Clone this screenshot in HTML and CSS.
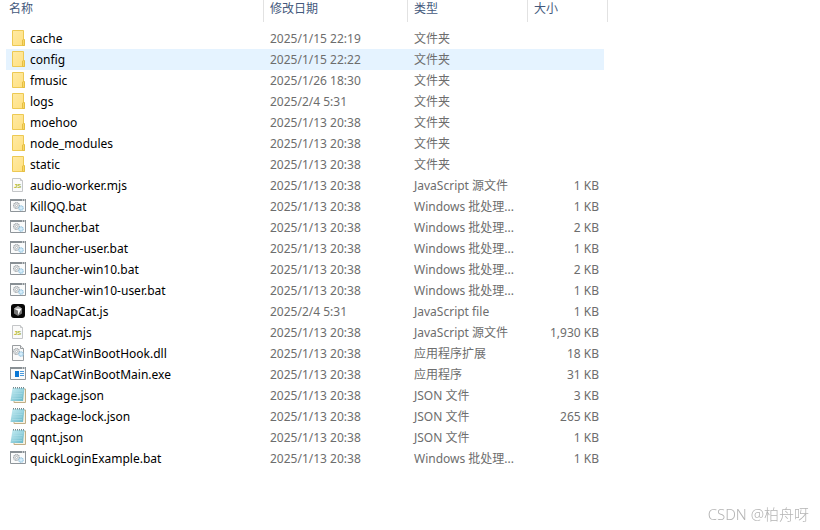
FILE: index.html
```
<!DOCTYPE html>
<html lang="zh-CN">
<head>
<meta charset="utf-8">
<title>NapCat</title>
<link rel="stylesheet" href="styles.css">
</head>
<body>
<svg class="sprite" aria-hidden="true">
  <defs>
    <linearGradient id="paper" x1="0" y1="0" x2="1" y2="1"><stop offset="0" stop-color="#ffeaa5"/><stop offset="1" stop-color="#ffe07f"/></linearGradient>
    <linearGradient id="note" x1="0" y1="0" x2="1" y2="1"><stop offset="0" stop-color="#c9eff5"/><stop offset="1" stop-color="#62b4c6"/></linearGradient>
    <g id="gears" fill="#e3e6e8">
      <circle cx="3.5" cy="3.5" r="2.9" stroke="#a2a7ab" stroke-width="1.2" stroke-dasharray="1.2 .5"/>
      <circle cx="3.5" cy="3.5" r="1" fill="#fff" stroke="#a2a7ab" stroke-width=".6"/>
      <circle cx="8" cy="6" r="2.2" fill="#d5edfa" stroke="#98c5e0" stroke-width="1.2" stroke-dasharray="1.1 .4"/>
    </g>
    <symbol id="folder" viewBox="0 0 16 16">
      <path d="M2.5 .5h11v9h1v6h-12z" fill="url(#paper)" stroke="#edc953"/>
      <path d="M12.5 15.500v-5.500l1-.5 1 .5v5.500z" fill="#f8d869" stroke="#e5be43"/>
    </symbol>
    <symbol id="js" viewBox="0 0 16 16">
      <path d="M2.500 1.500h8l2 2v11h-10z" fill="#fafafa" stroke="#c4c6c8"/>
      <path d="M10.500 1.500v2h2" fill="#eee" stroke="#c4c6c8"/>
      <text x="4" y="11" class="js-mark">JS</text>
    </symbol>
    <symbol id="bat" viewBox="0 0 16 16">
      <path d="M.5 2.500h15v11H.5z" fill="#fafbfb" stroke="#8f959a"/>
      <path d="M0 1h16v2H0z" fill="#899095"/>
      <path d="M12 1.500h1v1h-1zM14 1.500h1v1h-1z" fill="#fff"/>
      <use href="#gears" x="3" y="4"/>
    </symbol>
    <symbol id="cursor" viewBox="0 0 16 16">
      <rect x="1" y="1" width="14" height="14" rx="3" fill="#080808"/>
      <path d="M4 5.500 8 3l4 2.500v5L8 13l-4-2.500z" fill="#777"/>
      <path d="M4 5.500 8 3l4 2.500L8 8z" fill="#aaa"/>
      <path d="M4.500 5.700h7L8 12V7.600z" fill="#fff"/>
    </symbol>
    <symbol id="dll" viewBox="0 0 16 16">
      <path d="M2.500 .5h8l3 3v12h-11z" fill="#fafafa" stroke="#999da0"/>
      <path d="M10.500 .5v3h3" fill="#eee" stroke="#999da0"/>
      <use href="#gears" x="3" y="3"/>
    </symbol>
    <symbol id="exe" viewBox="0 0 16 16">
      <path d="M.5 2.500h15v11H.5z" fill="#fafbfb" stroke="#8f959a"/>
      <path d="M0 1h16v2H0z" fill="#899095"/>
      <path d="M12 1.500h1v1h-1zM14 1.500h1v1h-1z" fill="#fff"/>
      <path d="M5 5h4v6H5z" fill="#0877d5"/>
      <path d="M10 5.500h4M10 7.500h4M10 9.500h4" stroke="#4a9bdd"/>
    </symbol>
    <symbol id="json" viewBox="0 0 16 16">
      <path d="M5 2h10.500v13.500H4V14z" fill="#f7f2e2" stroke="#c0ae86"/>
      <path d="M2.500 1h12L13 14H.5z" fill="url(#note)"/>
      <path d="M3 4h10M3 6.500h9.500M2.500 9H12M2 11.500h10" stroke="#b5e2ea" stroke-width=".5"/>
      <path d="M3.500 0v1.500M5.500 0v1.500M7.500 0v1.500M9.500 0v1.500M11.500 0v1.500M13.500 0v1.500" stroke="#526a70" stroke-width=".8"/>
    </symbol>
  </defs>
</svg>
<main>
<table class="files">
  <colgroup><col class="col-name"><col class="col-date"><col class="col-type"><col class="col-size"><col class="col-edge"></colgroup>
  <thead>
    <tr><th>名称</th><th>修改日期</th><th>类型</th><th colspan="2">大小</th></tr>
  </thead>
  <tbody>
    <tr><td><svg class="icon"><use href="#folder"/></svg>cache</td><td>2025/1/15 22:19</td><td>文件夹</td><td></td></tr>
    <tr class="hovered"><td><svg class="icon"><use href="#folder"/></svg>config</td><td>2025/1/15 22:22</td><td>文件夹</td><td></td></tr>
    <tr><td><svg class="icon"><use href="#folder"/></svg>fmusic</td><td>2025/1/26 18:30</td><td>文件夹</td><td></td></tr>
    <tr><td><svg class="icon"><use href="#folder"/></svg>logs</td><td>2025/2/4 5:31</td><td>文件夹</td><td></td></tr>
    <tr><td><svg class="icon"><use href="#folder"/></svg>moehoo</td><td>2025/1/13 20:38</td><td>文件夹</td><td></td></tr>
    <tr><td><svg class="icon"><use href="#folder"/></svg>node_modules</td><td>2025/1/13 20:38</td><td>文件夹</td><td></td></tr>
    <tr><td><svg class="icon"><use href="#folder"/></svg>static</td><td>2025/1/13 20:38</td><td>文件夹</td><td></td></tr>
    <tr><td><svg class="icon"><use href="#js"/></svg>audio-worker.mjs</td><td>2025/1/13 20:38</td><td>JavaScript 源文件</td><td>1 KB</td></tr>
    <tr><td><svg class="icon"><use href="#bat"/></svg>KillQQ.bat</td><td>2025/1/13 20:38</td><td>Windows 批处理...</td><td>1 KB</td></tr>
    <tr><td><svg class="icon"><use href="#bat"/></svg>launcher.bat</td><td>2025/1/13 20:38</td><td>Windows 批处理...</td><td>2 KB</td></tr>
    <tr><td><svg class="icon"><use href="#bat"/></svg>launcher-user.bat</td><td>2025/1/13 20:38</td><td>Windows 批处理...</td><td>1 KB</td></tr>
    <tr><td><svg class="icon"><use href="#bat"/></svg>launcher-win10.bat</td><td>2025/1/13 20:38</td><td>Windows 批处理...</td><td>2 KB</td></tr>
    <tr><td><svg class="icon"><use href="#bat"/></svg>launcher-win10-user.bat</td><td>2025/1/13 20:38</td><td>Windows 批处理...</td><td>1 KB</td></tr>
    <tr><td><svg class="icon"><use href="#cursor"/></svg>loadNapCat.js</td><td>2025/2/4 5:31</td><td>JavaScript file</td><td>1 KB</td></tr>
    <tr><td><svg class="icon"><use href="#js"/></svg>napcat.mjs</td><td>2025/1/13 20:38</td><td>JavaScript 源文件</td><td>1,930 KB</td></tr>
    <tr><td><svg class="icon"><use href="#dll"/></svg>NapCatWinBootHook.dll</td><td>2025/1/13 20:38</td><td>应用程序扩展</td><td>18 KB</td></tr>
    <tr><td><svg class="icon"><use href="#exe"/></svg>NapCatWinBootMain.exe</td><td>2025/1/13 20:38</td><td>应用程序</td><td>31 KB</td></tr>
    <tr><td><svg class="icon"><use href="#json"/></svg>package.json</td><td>2025/1/13 20:38</td><td>JSON 文件</td><td>3 KB</td></tr>
    <tr><td><svg class="icon"><use href="#json"/></svg>package-lock.json</td><td>2025/1/13 20:38</td><td>JSON 文件</td><td>265 KB</td></tr>
    <tr><td><svg class="icon"><use href="#json"/></svg>qqnt.json</td><td>2025/1/13 20:38</td><td>JSON 文件</td><td>1 KB</td></tr>
    <tr><td><svg class="icon"><use href="#bat"/></svg>quickLoginExample.bat</td><td>2025/1/13 20:38</td><td>Windows 批处理...</td><td>1 KB</td></tr>
  </tbody>
</table>
</main>
<div class="watermark">CSDN @柏舟呀</div>
</body>
</html>
```
FILE: styles.css
```
body {
  margin: 0;
  background: #fff;
  color: #000;
  font: 12px/20px "Noto Sans", "Noto Sans CJK SC", sans-serif;
}

.sprite {
  position: absolute;
  width: 0;
  height: 0;
}

.js-mark {
  font: bold 6px "Liberation Sans", sans-serif;
  fill: #b0b51c;
}

main {
  padding-left: 6px;
}

.files {
  width: 602px;
  table-layout: fixed;
  border-collapse: separate;
  border-spacing: 0;
}

.col-name { width: 258px; }
.col-date { width: 144px; }
.col-type { width: 120px; }
.col-size { width: 76px; }
.col-edge { width: 4px; }

th {
  height: 22px;
  padding: 0 6px 4px;
  box-sizing: border-box;
  border-right: 1px solid #e2e2e2;
  color: #44597c;
  font-weight: 400;
  line-height: 18px;
  text-align: left;
}

th:first-child {
  padding-left: 3px;
}

tbody::before {
  content: "";
  display: table-row;
  height: 6px;
}

td {
  height: 21px;
  padding: 0 6px;
  box-sizing: border-box;
  color: #6d6d6d;
  white-space: nowrap;
}

td:first-child {
  padding-left: 4px;
  color: #000;
}

td:nth-child(4) {
  padding-right: 5px;
  text-align: right;
}

.hovered td {
  background: #e5f3ff;
}

.icon {
  width: 16px;
  height: 16px;
  margin-right: 4px;
  vertical-align: -3px;
}

.watermark {
  position: fixed;
  right: 11px;
  bottom: 4px;
  color: #b4b4b4;
  font-size: 15px;
  font-weight: 300;
  line-height: 24px;
}
```
